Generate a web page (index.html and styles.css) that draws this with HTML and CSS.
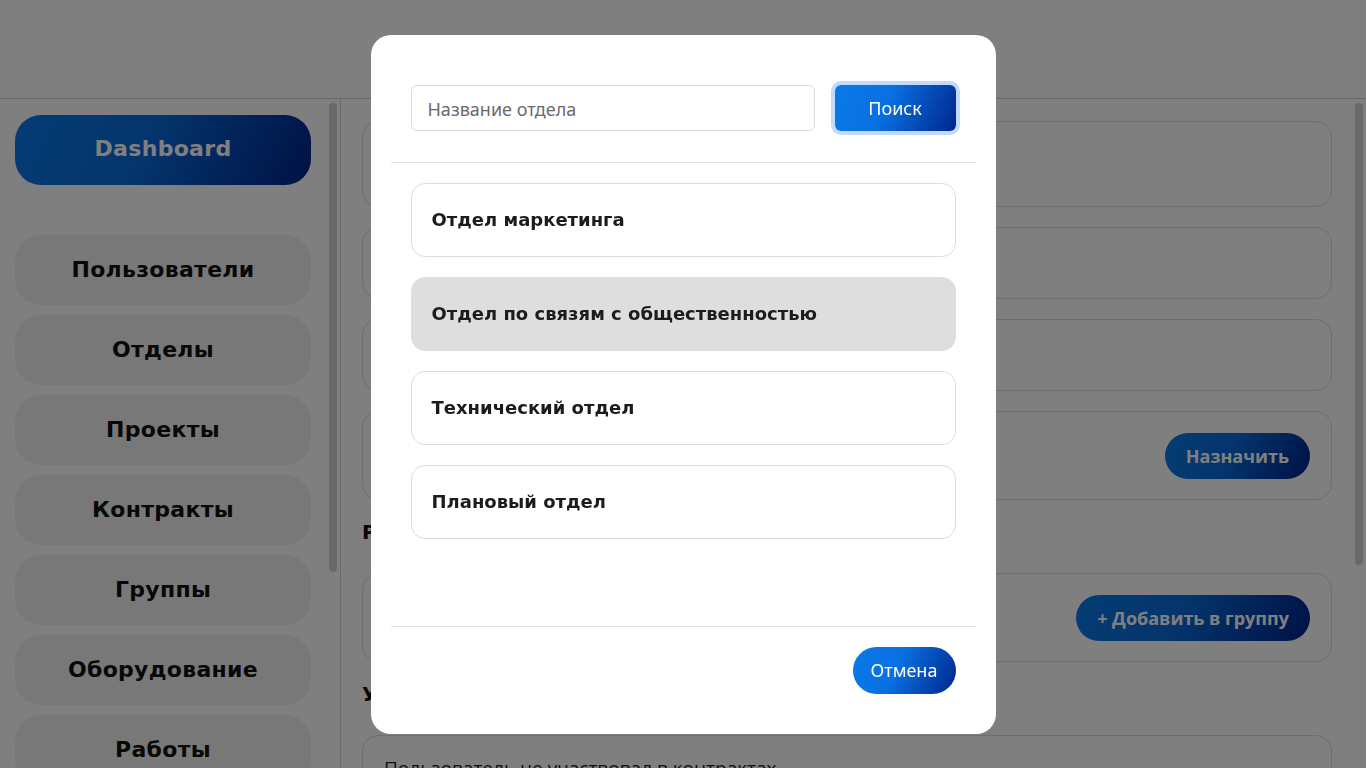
FILE: index.html
```html
<!DOCTYPE html>
<html lang="ru">
<head>
<meta charset="utf-8">
<title>Отделы</title>
<link rel="stylesheet" href="styles.css">
</head>
<body>
<div class="app">
  <header class="topbar"></header>
  <div class="layout">
    <div class="pane pane-side">
      <nav class="sidebar">
        <a class="nav-item nav-active">Dashboard</a>
        <div class="nav-list">
          <a class="nav-item">Пользователи</a>
          <a class="nav-item">Отделы</a>
          <a class="nav-item">Проекты</a>
          <a class="nav-item">Контракты</a>
          <a class="nav-item">Группы</a>
          <a class="nav-item">Оборудование</a>
          <a class="nav-item">Работы</a>
          <a class="nav-item">Отчёты</a>
          <a class="nav-item">Настройки</a>
          <a class="nav-item">Выход</a>
        </div>
      </nav>
      <div class="scroll-thumb thumb-side"></div>
    </div>
    <div class="pane pane-main">
      <main class="content">
        <div class="card card-h86">
          <div class="label">ФИО</div>
          <div class="value">Иванов Иван Иванович</div>
        </div>
        <div class="card card-h72">
          <div class="value">ivanov@example.com</div>
        </div>
        <div class="card card-h72">
          <div class="value">Должность: инженер</div>
        </div>
        <div class="card card-action">
          <div class="value">Отдел не назначен</div>
          <button class="pill-btn">Назначить</button>
        </div>
        <h3 class="section-title">Рабочие группы</h3>
        <div class="card card-action">
          <div class="value">Пользователь не состоит в группах</div>
          <button class="pill-btn">+ Добавить в группу</button>
        </div>
        <h3 class="section-title">Участие в контрактах</h3>
        <div class="card card-text">
          <div class="value">Пользователь не участвовал в контрактах</div>
        </div>
        <h3 class="section-title">Оборудование</h3>
        <div class="card card-text">
          <div class="value">Оборудование не закреплено</div>
        </div>
      </main>
      <div class="scroll-thumb thumb-main"></div>
    </div>
  </div>
</div>

<div class="overlay">
  <div class="modal">
    <div class="modal-head">
      <input class="search-input" type="text" placeholder="Название отдела">
      <button class="btn-primary btn-search">Поиск</button>
    </div>
    <div class="modal-body">
      <div class="dept">Отдел маркетинга</div>
      <div class="dept dept-hover">Отдел по связям с общественностью</div>
      <div class="dept">Технический отдел</div>
      <div class="dept">Плановый отдел</div>
    </div>
    <div class="modal-foot">
      <button class="btn-primary btn-cancel">Отмена</button>
    </div>
  </div>
</div>
</body>
</html>
```
FILE: styles.css
```css
* { box-sizing: border-box; }
html, body { margin: 0; height: 100%; overflow: hidden; }
body {
  font-family: "Noto Sans", "Open Sans", sans-serif;
  background: #fff;
  color: #111;
}
.app { height: 100vh; display: flex; flex-direction: column; }
.topbar {
  height: 99px;
  flex: none;
  background: #fff;
  border-bottom: 1px solid #d0d0d0;
}
.layout { flex: 1; display: flex; min-height: 0; }

.pane { position: relative; min-height: 0; }
.pane-side {
  width: 341px;
  flex: none;
  border-right: 1px solid #d6d6d6;
}
.pane-main { flex: 1; }

.sidebar {
  height: 100%;
  overflow: hidden;
  padding: 16px 29px 16px 15px;
}
.nav-list { margin-top: 50px; display: flex; flex-direction: column; gap: 10px; }
.nav-item {
  display: flex;
  align-items: center;
  justify-content: center;
  height: 70px;
  padding-bottom: 2px;
  border-radius: 26px;
  background: #f0f0f0;
  font-family: "DejaVu Sans", sans-serif;
  font-weight: bold;
  font-size: 22px;
  letter-spacing: 0.3px;
  color: #111;
}
.nav-active {
  background: linear-gradient(115deg, #0a7ae8 0%, #0869d8 45%, #00238a 100%);
  color: #fff;
  padding-bottom: 4px;
}

.scroll-thumb {
  position: absolute;
  width: 8px;
  border-radius: 4px;
  background: #d2d2d2;
}
.thumb-side { top: 4px; right: 3px; height: 469px; }
.thumb-main { top: 4px; right: 3px; height: 462px; }

.content {
  height: 100%;
  overflow: hidden;
  padding: 22px 34px 40px 21px;
  display: flex;
  flex-direction: column;
  gap: 20px;
}

.card {
  flex: none;
  border: 1px solid #dcdcdc;
  border-radius: 16px;
  padding: 0 21px;
  display: flex;
  flex-direction: column;
  justify-content: center;
  font-family: "Open Sans", sans-serif;
  font-size: 17px;
}
.card-h86 { height: 86px; }
.card-h72 { height: 72px; }
.card-action {
  height: 89px;
  flex-direction: row;
  align-items: center;
  justify-content: space-between;
}
.card-text {
  height: 89px;
  justify-content: flex-start;
  padding-top: 20px;
  font-size: 19px;
}
.label { font-size: 14px; color: #666; }
.value { color: #222; line-height: 24px; }
.pill-btn {
  border: none;
  height: 46px;
  padding: 0 21px;
  border-radius: 23px;
  background: linear-gradient(115deg, #0a7ae8 0%, #0869d8 45%, #00238a 100%);
  color: #fff;
  font-family: "Open Sans", sans-serif;
  font-weight: 700;
  font-size: 18px;
}
.section-title {
  margin: 0 0 9px;
  font-family: "DejaVu Sans", sans-serif;
  font-weight: bold;
  font-size: 20px;
  line-height: 24px;
}

.overlay {
  position: fixed;
  inset: 0;
  background: rgba(0, 0, 0, 0.5);
  display: flex;
  align-items: center;
  justify-content: center;
}
.modal {
  width: 625px;
  height: 699px;
  background: #fff;
  border-radius: 20px;
  display: flex;
  flex-direction: column;
}
.modal-head {
  display: flex;
  gap: 20px;
  margin: 0 20px;
  padding: 50px 20px 31px;
  border-bottom: 1px solid #dfe1e6;
}
.search-input {
  flex: 1;
  height: 46px;
  border: 1px solid #dcdcdc;
  border-radius: 6px;
  padding: 2px 16px 0;
  font-family: "Noto Sans", sans-serif;
  font-size: 18px;
  color: #222;
  outline: none;
}
.search-input::placeholder { color: #6a6a6a; }
.btn-primary {
  border: none;
  color: #fff;
  font-family: "Noto Sans", sans-serif;
  font-size: 18px;
  background: linear-gradient(115deg, #0a7ae8 0%, #0a70e2 42%, #00268c 100%);
}
.btn-search {
  width: 121px;
  height: 46px;
  border-radius: 6px;
  box-shadow: 0 0 0 4px #c3dafd;
}
.modal-body {
  flex: 1;
  padding: 20px 40px;
  display: flex;
  flex-direction: column;
  gap: 20px;
}
.dept {
  height: 74px;
  border: 1px solid #dcdcdc;
  border-radius: 14px;
  padding: 0 20px;
  display: flex;
  align-items: center;
  font-family: "DejaVu Sans", sans-serif;
  font-weight: bold;
  font-size: 18px;
  color: #1c1c1c;
}
.dept-hover { background: #dedede; border-color: #dedede; }
.modal-foot {
  margin: 0 20px;
  border-top: 1px solid #dfe1e6;
  padding: 20px 20px 40px;
  display: flex;
  justify-content: flex-end;
}
.btn-cancel {
  width: 103px;
  height: 47px;
  border-radius: 24px;
}
```
